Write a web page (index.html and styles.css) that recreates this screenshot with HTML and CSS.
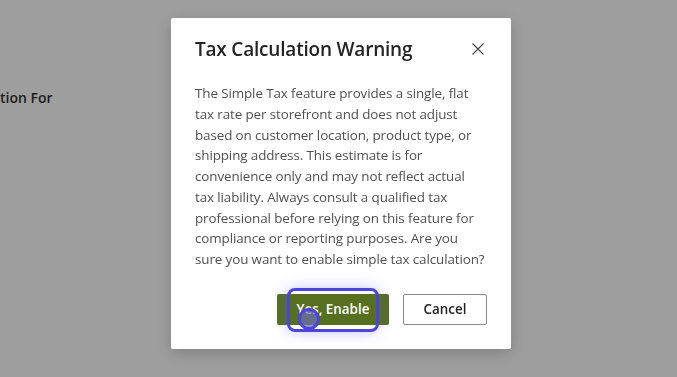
FILE: index.html
```html
<!DOCTYPE html>
<html>
<head>
    <title>Tax Settings</title>
    <link rel="stylesheet" href="styles.css">
</head>
<body>
    <div class="page">
        <div class="section-title">tion For</div>
    </div>

    <div class="backdrop">
        <div class="modal" role="dialog" aria-labelledby="modalTitle">
            <div class="modal-header">
                <h2 id="modalTitle">Tax Calculation Warning</h2>
                <button class="close-btn" aria-label="Close">
                    <svg width="12" height="12" viewBox="0 0 12 12">
                        <path d="M0.5 0.5 L11.5 11.5 M11.5 0.5 L0.5 11.5" stroke="#444" stroke-width="1.1" fill="none"/>
                    </svg>
                </button>
            </div>
            <p class="modal-body">
                The Simple Tax feature provides a single, flat tax rate per storefront and does not adjust based on customer location, product type, or shipping address. This estimate is for convenience only and may not reflect actual tax liability. Always consult a qualified tax professional before relying on this feature for compliance or reporting purposes. Are you sure you want to enable simple tax calculation?
            </p>
            <div class="modal-actions">
                <button class="btn btn-primary">
                    Yes, Enable
                    <span class="focus-ring"></span>
                    <span class="pointer-dot"></span>
                </button>
                <button class="btn btn-secondary">Cancel</button>
            </div>
        </div>
    </div>
</body>
</html>
```

FILE: styles.css
```css
body {
    margin: 0;
    font-family: "Open Sans", "Noto Sans", Arial, sans-serif;
    background-color: #ffffff;
    height: 100vh;
    overflow: hidden;
}

.page {
    padding-top: 88px;
}

.section-title {
    font-size: 14px;
    font-weight: 600;
    color: #333;
    line-height: 20px;
}

.backdrop {
    position: fixed;
    inset: 0;
    background-color: rgba(0, 0, 0, 0.38);
    display: flex;
    justify-content: center;
    align-items: flex-start;
    padding-top: 18px;
    padding-left: 5px;
}

.modal {
    width: 340px;
    box-sizing: border-box;
    background-color: #fff;
    border-radius: 2px;
    padding: 22px 24px 24px;
    box-shadow: 0 4px 16px rgba(0, 0, 0, 0.2);
}

.modal-header {
    display: flex;
    justify-content: space-between;
    align-items: center;
}

.modal-header h2 {
    margin: 0;
    font-size: 19px;
    font-weight: 600;
    color: #242424;
    line-height: 18px;
    letter-spacing: -0.2px;
}

.close-btn {
    border: none;
    background: none;
    padding: 0;
    margin-right: 2px;
    width: 14px;
    height: 14px;
    display: flex;
    align-items: center;
    justify-content: center;
    cursor: pointer;
}

.modal-body {
    margin: 25px 0 0;
    font-size: 13.4px;
    line-height: 20.75px;
    color: #505050;
    letter-spacing: -0.1px;
}

.modal-actions {
    display: flex;
    justify-content: flex-end;
    gap: 14px;
    margin-top: 24px;
}

.btn {
    height: 31px;
    padding: 0;
    white-space: nowrap;
    font-family: "Open Sans", "Noto Sans", Arial, sans-serif;
    font-size: 13.4px;
    font-weight: 600;
    border-radius: 2px;
    cursor: pointer;
}

.btn-primary {
    position: relative;
    width: 112px;
    background-color: #56701f;
    color: #fff;
    border: none;
}

.btn-secondary {
    width: 84px;
    background-color: #fff;
    color: #242424;
    border: 1px solid #8a8a8a;
    font-weight: 600;
}

.focus-ring {
    position: absolute;
    left: 10px;
    top: -6px;
    width: 92px;
    height: 44px;
    box-sizing: border-box;
    border: 3px solid #4b45db;
    border-radius: 8px;
    box-shadow: 0 0 14px rgba(90, 80, 240, 0.35);
    pointer-events: none;
}

.pointer-dot {
    position: absolute;
    left: 21px;
    top: 14px;
    width: 22px;
    height: 22px;
    box-sizing: border-box;
    border: 3px solid #4b45db;
    border-radius: 50%;
    background-color: rgba(110, 110, 190, 0.7);
    pointer-events: none;
}
```
